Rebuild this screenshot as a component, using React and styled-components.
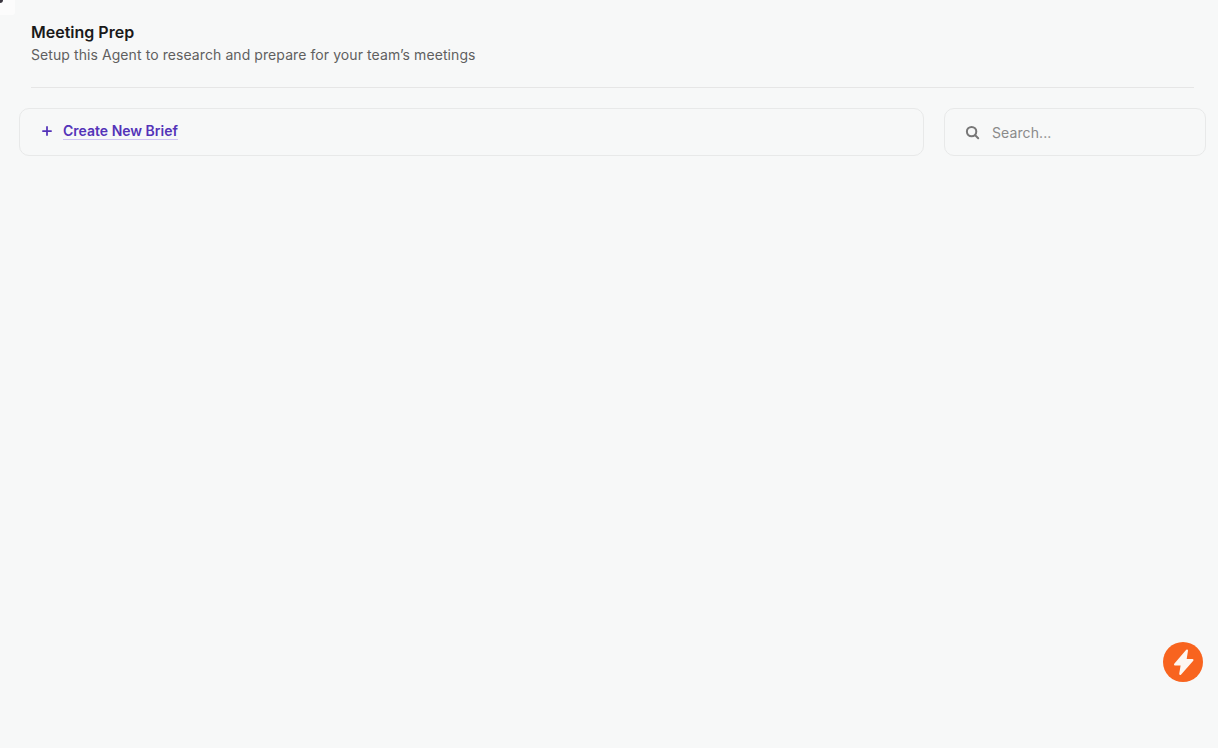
import React from "react"
import styled, { createGlobalStyle } from "styled-components"
import { Plus } from "lucide-react"

const GlobalStyle = createGlobalStyle`
  html, body {
    margin: 0;
    padding: 0;
    height: 100%;
    background: #f7f8f8;
    font-family: Inter, "Liberation Sans", sans-serif;
  }
  #root {
    height: 100%;
  }
`

const Page = styled.main`
  height: 748px;
  box-sizing: border-box;
  overflow: hidden;
  padding: 22px 12px 0 19px;
  background: #f7f8f8;
`

const Header = styled.header`
  margin: 0 12px 20px 12px;
  padding-bottom: 22px;
  border-bottom: 1px solid #e6e6e6;
`

const Title = styled.h1`
  margin: 0;
  font-size: 16px;
  line-height: 20px;
  font-weight: 600;
  color: #1a1a1a;
`

const Subtitle = styled.p`
  margin: 3px 0 0;
  font-size: 14px;
  line-height: 20px;
  letter-spacing: 0.08px;
  color: #5f5f5f;
`

const Toolbar = styled.div`
  display: grid;
  grid-template-columns: 905px 262px;
  column-gap: 20px;
`

const Panel = styled.div`
  height: 48px;
  box-sizing: border-box;
  display: flex;
  align-items: center;
  border: 1px solid #e8e9e9;
  border-radius: 10px;
  background: #f7f8f8;
`

const CreatePanel = styled(Panel)`
  padding: 0 0 2px 20px;
  gap: 9px;
`

const CreateLink = styled.a`
  font-size: 14px;
  line-height: 17px;
  font-weight: 600;
  color: #5433b8;
  text-decoration: none;
  border-bottom: 1px solid #cfc4f2;
  cursor: pointer;
`

const SearchPanel = styled(Panel)`
  padding-left: 20px;
  gap: 12px;
`

const SearchInput = styled.input`
  flex: 1;
  min-width: 0;
  padding: 0;
  border: 0;
  outline: 0;
  background: transparent;
  font-family: inherit;
  font-size: 14px;
  letter-spacing: 0.1px;
  color: #333;
  &::placeholder {
    color: #8a8a8a;
    opacity: 1;
  }
`

const Fab = styled.button`
  position: fixed;
  left: 1163px;
  top: 642px;
  width: 40px;
  height: 40px;
  padding: 0;
  display: flex;
  align-items: center;
  justify-content: center;
  border: 0;
  border-radius: 50%;
  background: #f8641f;
  cursor: pointer;
`

const CornerMark = styled.span`
  position: fixed;
  left: 0;
  top: 0;
  width: 15px;
  height: 15px;
  background: #fcfcfc;
  border-bottom-right-radius: 3px;
  &::before {
    content: "";
    position: absolute;
    left: 0;
    top: 0;
    width: 3px;
    height: 3px;
    background: #3b3640;
    border-bottom-right-radius: 3px;
  }
`

const SearchIcon = () => (
  <svg width="15" height="15" viewBox="0 0 15 15" fill="none" stroke="#777" strokeWidth="2" strokeLinecap="round">
    <circle cx="6.6" cy="6.6" r="4.7" />
    <path d="M10.2 10.2 13.2 13.2" />
  </svg>
)

const BoltIcon = () => (
  <svg width="40" height="40" viewBox="0 0 40 40" fill="#fdf6f1" stroke="#fdf6f1" strokeWidth="2" strokeLinejoin="round">
    <path d="M24 8.5 12 22.5h6.8L17.2 32 29.5 18h-7z" />
  </svg>
)

const App = () => {
  return (
    <>
      <GlobalStyle />
      <Page>
        <CornerMark />
        <Header>
          <Title>Meeting Prep</Title>
          <Subtitle>Setup this Agent to research and prepare for your team’s meetings</Subtitle>
        </Header>
        <Toolbar>
          <CreatePanel>
            <Plus size={14} color="#5433b8" strokeWidth={3} />
            <CreateLink>Create New Brief</CreateLink>
          </CreatePanel>
          <SearchPanel>
            <SearchIcon />
            <SearchInput placeholder="Search..." />
          </SearchPanel>
        </Toolbar>
        <Fab aria-label="Quick action">
          <BoltIcon />
        </Fab>
      </Page>
    </>
  )
}

export default App
